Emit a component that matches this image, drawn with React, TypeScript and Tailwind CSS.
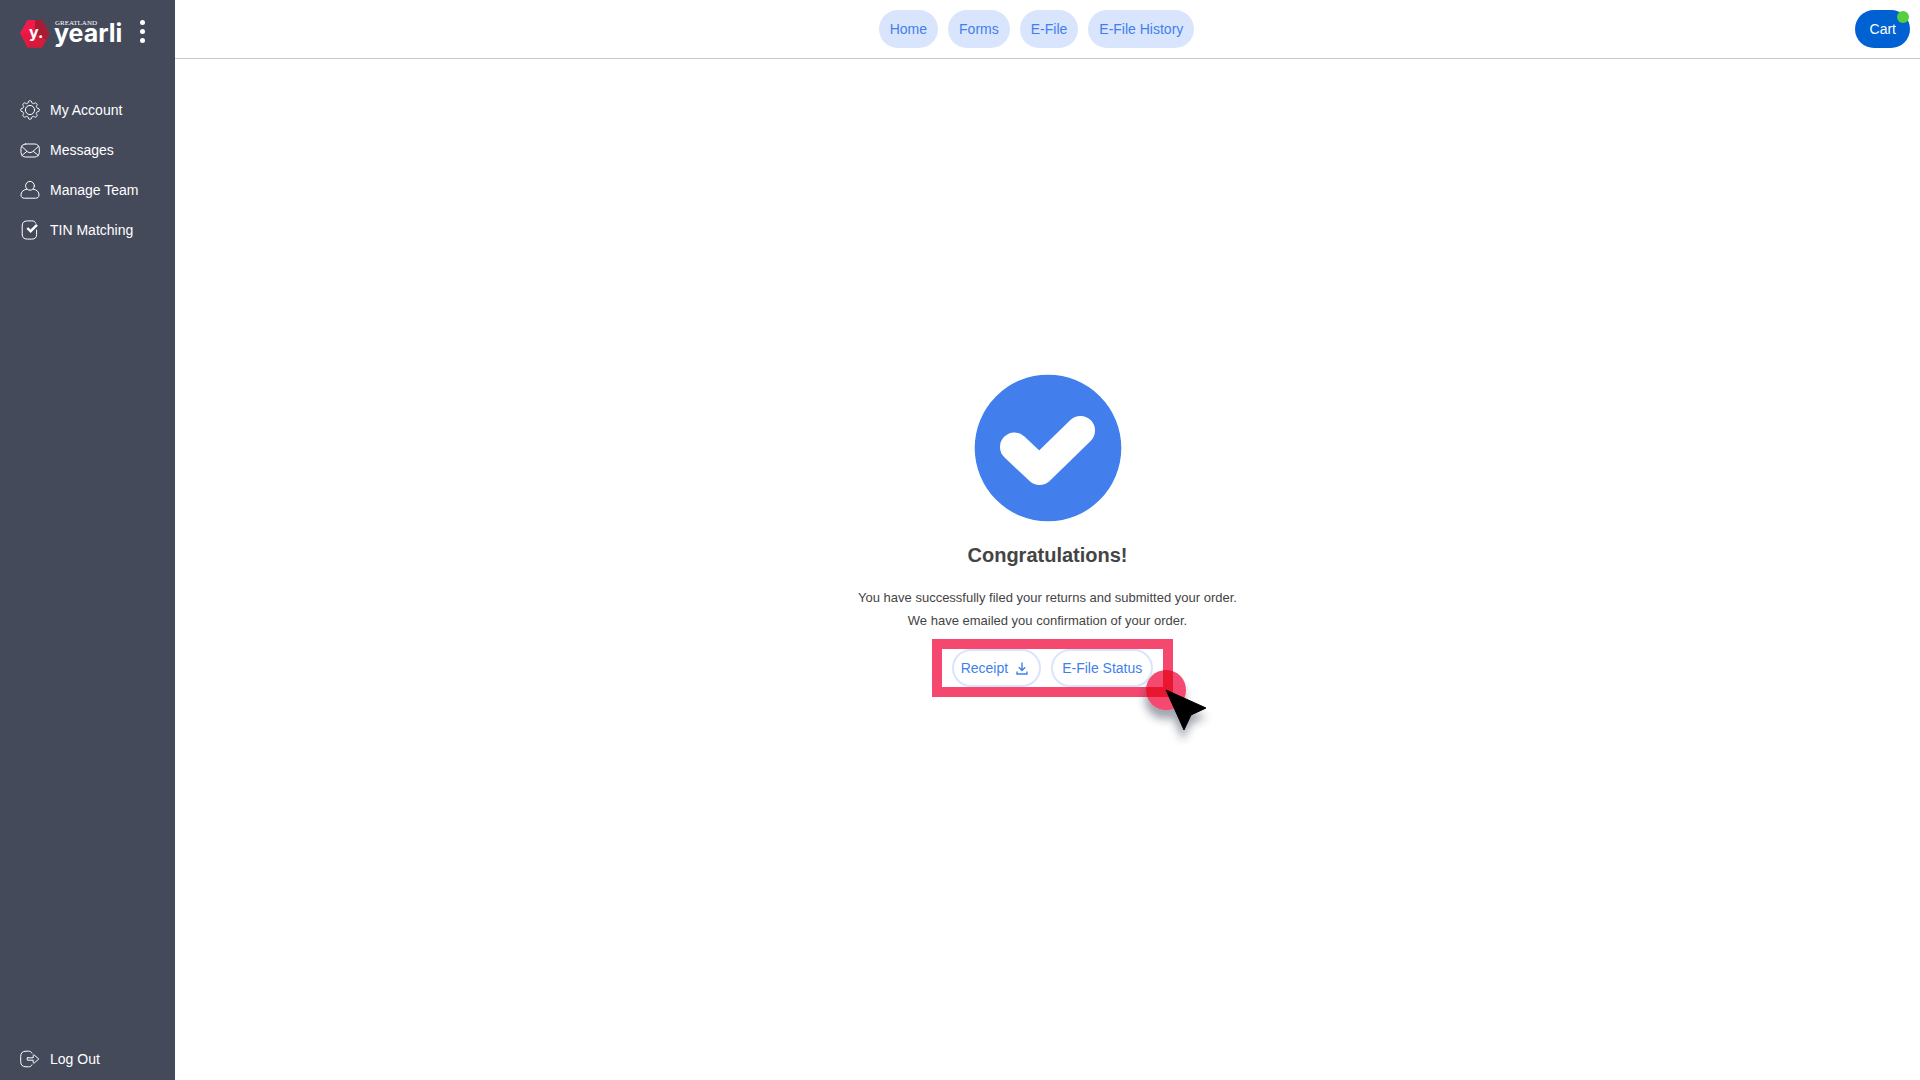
import React from "react";

const iconProps = {
  width: 20,
  height: 20,
  viewBox: "0 0 20 20",
  fill: "none",
  stroke: "currentColor",
  strokeWidth: 1,
  strokeLinecap: "round" as const,
  strokeLinejoin: "round" as const,
  "aria-hidden": true,
};

// Eight-lobed gear outline, sampled from a softened cosine wave around the centre.
const gearOutline = Array.from({ length: 96 }, (_, i) => {
  const angle = (i / 96) * Math.PI * 2;
  const radius = 8.2 + 1.1 * Math.tanh(2 * Math.cos(8 * angle));
  return `${(10 + radius * Math.cos(angle)).toFixed(2)},${(10 + radius * Math.sin(angle)).toFixed(2)}`;
}).join(" ");

const GearIcon = () => (
  <svg {...iconProps}>
    <circle cx="10" cy="10" r="4.6" />
    <polygon points={gearOutline} />
  </svg>
);

const MailIcon = () => (
  <svg {...iconProps}>
    <rect x="1" y="4" width="18.3" height="13" rx="4.5" />
    <path d="M1.6 6.2L7.5 11.8Q10 13.8 12.5 11.8L18.7 6.2M1.8 15.6L6.8 11.4M18.5 15.6L13.3 11.4" />
  </svg>
);

const TeamIcon = () => (
  <svg {...iconProps}>
    <circle cx="10" cy="5.8" r="4.4" />
    <path d="M6.6 9.2C3 9.8 1 12 1 15C1 17.2 2.4 18.2 4.5 18.2H15.5C17.6 18.2 19 17.2 19 15C19 12 17 9.8 13.4 9.2" />
  </svg>
);

const TinIcon = () => (
  <svg {...iconProps}>
    <path d="M15.7 3.2C15 1.4 13.8.9 11.8.9H7.5C3.8.9 2.2 2.5 2.2 6V14C2.2 17.5 3.8 19.1 7.5 19.1H11.8C15 19.1 16.6 17.6 16.6 14.5V10" />
    <path d="M7.3 8L10.6 11.2L17 4.8" strokeWidth="2.4" strokeLinecap="butt" strokeLinejoin="miter" />
  </svg>
);

const LogOutIcon = () => (
  <svg {...iconProps}>
    <path d="M12 4.2C11.5 2.8 10.3 2.2 8.5 2.2H6C2.4 2.2.7 4 .7 7.5V12.5C.7 16 2.4 17.8 6 17.8H8.5C10.3 17.8 11.5 17.2 12 15.8" />
    <path d="M7.5 8.8H13.2V6.4Q13.4 5.4 14.2 6L18.8 10L14.2 14Q13.4 14.6 13.2 13.6V11.2H7.5Q6.3 10 7.5 8.8Z" />
  </svg>
);

const Logo = () => (
  <svg width="102" height="34" viewBox="0 0 102 34" role="img" aria-label="Greatland Yearli">
    <path d="M7.5 4H22L29.5 17.5L22 31.5H7.5L0 17.5Z" fill="#e4193f" />
    <path d="M7.5 4H22L14.8 17.5H0Z" fill="#f01b4b" />
    <path d="M15 4H22L29.5 17.5L26 24L14.8 17.5Z" fill="#a61c35" />
    <path d="M7.5 31.5L14.8 17.5L26 24L22 31.5Z" fill="#d71a3a" />
    <text x="9" y="22" fill="#fff" fontFamily="Inter, sans-serif" fontSize="16" fontWeight="700">y.</text>
    <text x="35" y="9" fill="#fff" fontFamily="'Liberation Serif', serif" fontSize="7">GREATLAND</text>
    <text x="34" y="26" fill="#fff" fontFamily="Inter, sans-serif" fontSize="25" fontWeight="700">yearli</text>
  </svg>
);

const menu = [
  { label: "My Account", Icon: GearIcon },
  { label: "Messages", Icon: MailIcon },
  { label: "Manage Team", Icon: TeamIcon },
  { label: "TIN Matching", Icon: TinIcon },
];

const tabs = ["Home", "Forms", "E-File", "E-File History"];

function SideLink({ label, Icon }: { label: string; Icon: () => React.ReactElement }) {
  return (
    <a href="#" className="flex h-5 items-center gap-[10px]">
      <Icon />
      {label}
    </a>
  );
}

export default function App() {
  return (
    <div className="flex min-h-screen bg-white font-['Liberation_Sans',Arial,sans-serif] text-sm">
      <aside className="flex w-[175px] shrink-0 flex-col bg-[#454a5b] pb-[11px] pl-5 text-white">
        <div className="flex items-start pt-4">
          <a href="#">
            <Logo />
          </a>
          <button type="button" aria-label="Menu" className="mt-1 ml-[18px] flex flex-col gap-1">
            <span className="size-[5px] rounded-full bg-white" />
            <span className="size-[5px] rounded-full bg-white" />
            <span className="size-[5px] rounded-full bg-white" />
          </button>
        </div>
        <nav className="mt-[50px] flex flex-1 flex-col gap-5">
          {menu.map((item) => (
            <SideLink key={item.label} {...item} />
          ))}
        </nav>
        <SideLink label="Log Out" Icon={LogOutIcon} />
      </aside>

      <div className="flex flex-1 flex-col">
        <header className="flex h-[59px] items-center border-b border-[#c8c8c8] pr-[10px]">
          <div className="flex-1" />
          <nav className="mr-3 flex gap-[10px]">
            {tabs.map((tab) => (
              <a
                key={tab}
                href="#"
                className="flex h-[38px] items-center rounded-full bg-[#d9e5fc] px-[11px] text-[#427fed]"
              >
                {tab}
              </a>
            ))}
          </nav>
          <div className="flex flex-1 justify-end">
            <button type="button" className="relative h-[38px] rounded-full bg-[#0062d2] pr-[14px] pl-[15px] text-white">
              Cart
              <span className="absolute top-px right-px size-3 rounded-full bg-[#57cf3d]" />
            </button>
          </div>
        </header>

        <main className="flex flex-1 flex-col items-center justify-center pb-[78px] text-[#444]">
          <svg width="148" height="148" viewBox="0 0 148 148" aria-hidden="true">
            <circle cx="74" cy="74" r="73.3" fill="#427fed" />
            <path
              d="M40.5 73L65.5 96.5L106.5 56.5"
              fill="none"
              stroke="#fff"
              strokeWidth="29"
              strokeLinecap="round"
              strokeLinejoin="round"
            />
          </svg>
          <h1 className="mt-[19px] text-xl leading-7 font-bold">Congratulations!</h1>
          <p className="mt-[17px] text-center text-[13px] leading-[23px]">
            You have successfully filed your returns and submitted your order.
            <br />
            We have emailed you confirmation of your order.
          </p>
          <div className="relative mt-[17px] ml-[10px] flex gap-[10px] text-[#427fed]">
            <button
              type="button"
              className="flex h-[38px] items-center gap-2 rounded-full border-2 border-[#d9e5fc] pr-[11px] pl-[7px]"
            >
              Receipt
              <svg width="12" height="13" viewBox="0 0 12 13" fill="none" stroke="currentColor" strokeWidth="1.4" aria-hidden="true">
                <path d="M6 .5V8.5M2.8 5.3L6 8.5L9.2 5.3M1 9.5V12H11V9.5" />
              </svg>
            </button>
            <button type="button" className="h-[38px] rounded-full border-2 border-[#d9e5fc] px-[9px]">
              E-File Status
            </button>
            <div className="pointer-events-none absolute -inset-x-5 -inset-y-[10px] border-[10px] border-[#f4486f]">
              <svg
                className="absolute -right-[53px] -bottom-[58px] overflow-visible"
                width="70"
                height="75"
                viewBox="0 0 70 75"
                aria-hidden="true"
              >
                <defs>
                  <filter id="shadow" x="-50%" y="-50%" width="200%" height="200%">
                    <feDropShadow dx="-1" dy="9" stdDeviation="4" floodColor="#2a3048" floodOpacity="0.45" />
                  </filter>
                  <clipPath id="spot">
                    <circle cx="20" cy="20" r="20" />
                  </clipPath>
                </defs>
                <g filter="url(#shadow)">
                  <circle cx="20" cy="20" r="20" fill="#f4486f" />
                  <path d="M17 0H27V27H0V17H17Z" fill="#e8142f" clipPath="url(#spot)" />
                  <path d="M20 20L60 38L45 45L38 60Z" fill="#000" stroke="#000" strokeLinejoin="round" />
                </g>
              </svg>
            </div>
          </div>
        </main>
      </div>
    </div>
  );
}
